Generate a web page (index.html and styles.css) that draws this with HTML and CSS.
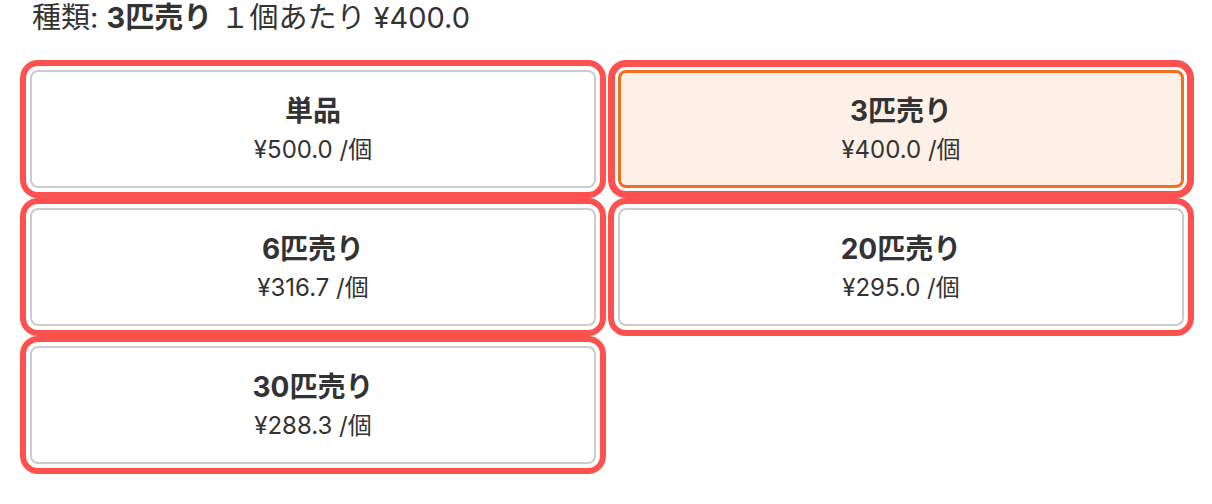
FILE: index.html
```html
<!DOCTYPE html>
<html lang="ja">
<head>
<meta charset="utf-8">
<link rel="stylesheet" href="styles.css">
</head>
<body>
<div class="summary">種類: <b>3匹売り</b> １個あたり ¥400.0</div>
<div class="grid">
  <div class="opt"><div class="name">単品</div><div class="price">¥500.0 /個</div></div>
  <div class="opt sel"><div class="name">3匹売り</div><div class="price">¥400.0 /個</div></div>
  <div class="opt"><div class="name">6匹売り</div><div class="price">¥316.7 /個</div></div>
  <div class="opt"><div class="name">20匹売り</div><div class="price">¥295.0 /個</div></div>
  <div class="opt"><div class="name">30匹売り</div><div class="price">¥288.3 /個</div></div>
</div>
</body>
</html>
```
FILE: styles.css
```css
html, body {
  margin: 0;
  padding: 0;
  background: #fff;
}
body {
  font-family: Inter, "Noto Sans CJK JP", sans-serif;
  color: #333;
  padding-bottom: 30px;
}
.summary {
  padding-left: 32px;
  font-size: 29px;
  line-height: 36px;
  height: 36px;
}
.grid {
  margin: 34px 0 0 30px;
  width: 1154px;
  display: grid;
  grid-template-columns: 566px 566px;
  grid-auto-rows: 118px;
  column-gap: 22px;
  row-gap: 20px;
}
.opt {
  box-sizing: border-box;
  border: 2.5px solid #ccc;
  border-radius: 8px;
  background: #fff;
  box-shadow: 0 0 0 4px #fff, 0 0 0 10px #ff5050;
  display: flex;
  flex-direction: column;
  align-items: center;
  justify-content: center;
}
.opt.sel {
  border: 3px solid #f07020;
  background: #fdf0e6;
  box-shadow: 0 0 0 3px #fff, 0 0 0 10px #ff5050;
}
.name {
  font-weight: bold;
  font-size: 28px;
  line-height: 36px;
}
.price {
  font-size: 24px;
  line-height: 30px;
  margin-top: 6px;
}
```
